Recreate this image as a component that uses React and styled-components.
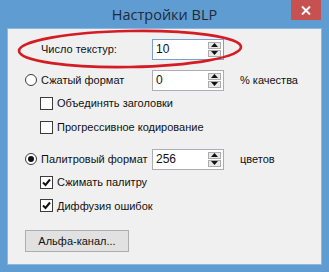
import React from 'react';
import styled, { createGlobalStyle } from 'styled-components';

const Global = createGlobalStyle`
  html, body { margin: 0; padding: 0; background: #5f9cd2; }
  body { font-family: "Liberation Sans", Arial, sans-serif; }
`;

const Window = styled.div`
  width: 329px;
  height: 272px;
  box-sizing: border-box;
  background: #5f9cd2;
  padding: 0 8px 8px;
  display: flex;
  flex-direction: column;
`;

const TitleBar = styled.div`
  height: 29px;
  flex: none;
  display: grid;
  grid-template-columns: 1fr auto 1fr;
  align-items: start;
`;

const Title = styled.div`
  grid-column: 2;
  margin-top: 5px;
  font-family: "Open Sans", "Noto Sans", sans-serif;
  font-size: 14.5px;
  line-height: 20px;
  color: #1f2a36;
`;

const CloseButton = styled.div`
  grid-column: 3;
  justify-self: end;
  width: 30px;
  height: 20px;
  background: #c75050;
  display: flex;
  align-items: center;
  justify-content: center;
`;

const Client = styled.div`
  flex: 1;
  position: relative;
  background: #f0f0f0;
  box-shadow: 0 0 0 1px #8cb7de;
  padding: 9px 0 0 17px;
  font-size: 11px;
  color: #111;
`;

const Row = styled.div`
  display: grid;
  grid-template-columns: 16px 111px 72px 16px auto;
  align-items: center;
  height: 22px;
  margin-top: ${p => p.$mt || 0}px;
`;

const Label = styled.span`
  grid-column: ${p => p.$col || 2};
  white-space: nowrap;
`;

const Radio = styled.span`
  grid-column: 1;
  width: 12px;
  height: 12px;
  box-sizing: border-box;
  border-radius: 50%;
  border: 1px solid #3c3c3c;
  background: #fff;
  display: flex;
  align-items: center;
  justify-content: center;
  &::after {
    content: '';
    width: 6px;
    height: 6px;
    border-radius: 50%;
    background: ${p => (p.$checked ? '#111' : 'transparent')};
  }
`;

const SpinBox = styled.div`
  grid-column: 3;
  height: 21px;
  box-sizing: border-box;
  border: 1px solid ${p => (p.$focus ? '#7a9fcf' : '#abadb3')};
  background: #fff;
  display: flex;
  align-items: center;
  padding: 0 2px 0 3px;
`;

const SpinValue = styled.span`
  flex: 1;
  font-size: 12px;
`;

const SpinButtons = styled.div`
  display: flex;
  flex-direction: column;
  gap: 1px;
`;

const SpinButton = styled.div`
  width: 13px;
  height: 7px;
  box-sizing: border-box;
  border: 1px solid #acacac;
  background: #e8e8e8;
  display: flex;
  align-items: center;
  justify-content: center;
`;

const CheckRow = styled.div`
  display: flex;
  align-items: center;
  gap: 4px;
  padding-left: 15px;
  height: ${p => p.$h || 24}px;
`;

const Box = styled.span`
  width: 13px;
  height: 13px;
  box-sizing: border-box;
  border: 1px solid #3c3c3c;
  background: #fff;
  display: flex;
  align-items: center;
  justify-content: center;
`;

const Button = styled.div`
  margin-top: 13px;
  width: 104px;
  height: 22px;
  box-sizing: border-box;
  border: 1px solid #adadad;
  background: #e1e1e1;
  display: flex;
  align-items: center;
  justify-content: center;
`;

const Ellipse = styled.svg`
  position: absolute;
  left: 0;
  top: 0;
  pointer-events: none;
`;

const Spin = ({ value, focus }) => (
  <SpinBox $focus={focus}>
    <SpinValue>{value}</SpinValue>
    <SpinButtons>
      <SpinButton>
        <svg width="7" height="4" viewBox="0 0 7 4"><path d="M0 4L3.5 0L7 4Z" fill="#111" /></svg>
      </SpinButton>
      <SpinButton>
        <svg width="7" height="4" viewBox="0 0 7 4"><path d="M0 0L3.5 4L7 0Z" fill="#111" /></svg>
      </SpinButton>
    </SpinButtons>
  </SpinBox>
);

const Check = ({ checked, children, h }) => (
  <CheckRow $h={h}>
    <Box>
      {checked && (
        <svg width="9" height="9" viewBox="0 0 9 9">
          <path d="M1 4.5L3.5 7L8 1.5" stroke="#111" strokeWidth="2" fill="none" />
        </svg>
      )}
    </Box>
    <span>{children}</span>
  </CheckRow>
);

export default function App() {
  return (
    <Window>
      <Global />
      <TitleBar>
        <Title>Настройки BLP</Title>
        <CloseButton>
          <svg width="10" height="9" viewBox="0 0 10 9">
            <path d="M1 0.5L9 8.5M9 0.5L1 8.5" stroke="#fff" strokeWidth="2" />
          </svg>
        </CloseButton>
      </TitleBar>
      <Client>
        <Row>
          <Label>Число текстур:</Label>
          <Spin value="10" focus />
        </Row>
        <Row $mt={9}>
          <Radio />
          <Label>Сжатый формат</Label>
          <Spin value="0" />
          <Label $col={5}>% качества</Label>
        </Row>
        <Check>Объединять заголовки</Check>
        <Check>Прогрессивное кодирование</Check>
        <Row $mt={9}>
          <Radio $checked />
          <Label>Палитровый формат</Label>
          <Spin value="256" />
          <Label $col={5}>цветов</Label>
        </Row>
        <Check checked>Сжимать палитру</Check>
        <Check checked h={23}>Диффузия ошибок</Check>
        <Button>Альфа-канал...</Button>
        <Ellipse width="313" height="80">
          <ellipse cx="122" cy="20" rx="111" ry="18" fill="none" stroke="#d41c24" strokeWidth="2.6" transform="rotate(-1 122 20)" />
        </Ellipse>
      </Client>
    </Window>
  );
}
